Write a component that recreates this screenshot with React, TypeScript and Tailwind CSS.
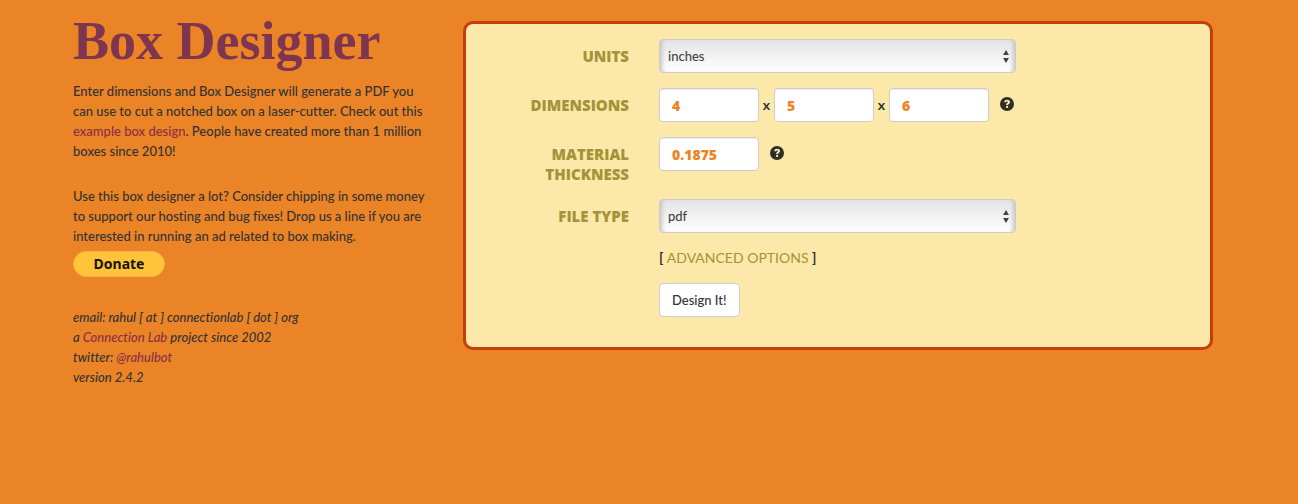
import type { ReactNode } from 'react';

function HelpIcon({ label }: { label: string }) {
  return (
    <button type="button" aria-label={label} className="mb-0.5 ml-[11px] shrink-0">
      <svg width="14" height="14" viewBox="0 0 14 14" aria-hidden="true">
        <circle cx="7" cy="7" r="7" fill="#2f2e26" />
        <path
          d="M4.2 5.2C4.3 3.5 5.4 2.7 7.1 2.7c1.7 0 2.9.9 2.9 2.3 0 1-.5 1.6-1.3 2.1-.5.3-.6.5-.6.9H6.1c0-1.1.3-1.6 1.1-2.1.5-.3.7-.5.7-.9 0-.4-.3-.6-.8-.6s-.8.3-.9.8z"
          fill="#fce9a9"
        />
        <rect x="6.1" y="8.9" width="2" height="2" fill="#fce9a9" />
      </svg>
    </button>
  );
}

function Row({ label, htmlFor, children }: { label?: string; htmlFor?: string; children: ReactNode }) {
  return (
    <div className="mb-[15px] grid grid-cols-[163px_minmax(0,1fr)] gap-x-[30px]">
      {label ? (
        <label
          htmlFor={htmlFor}
          className="pl-[15px] pt-[7px] text-right font-['Open_Sans',sans-serif] text-[15px] font-extrabold uppercase leading-5 text-[#a39439]"
        >
          {label}
        </label>
      ) : (
        <span />
      )}
      <div>{children}</div>
    </div>
  );
}

function Select({ id, options }: { id: string; options: string[] }) {
  return (
    <div className="relative max-w-[357px]">
      <select
        id={id}
        className="block h-[34px] w-full appearance-none rounded border border-[#ccc] bg-linear-to-b from-[#e4e4e4] to-white px-2 text-[13px] text-[#444] shadow-[inset_5px_0_4px_-3px_#c4c4c4,inset_-5px_0_4px_-3px_#c4c4c4]"
      >
        {options.map((option) => (
          <option key={option}>{option}</option>
        ))}
      </select>
      <svg
        className="pointer-events-none absolute right-[7px] top-[11px]"
        width="6"
        height="13"
        viewBox="0 0 6 13"
        fill="#444"
        aria-hidden="true"
      >
        <path d="M3 0 6 5H0zM0 8h6l-3 5z" />
      </svg>
    </div>
  );
}

function NumberBox({ id, value, label }: { id: string; value: string; label?: string }) {
  return (
    <input
      id={id}
      type="text"
      aria-label={label}
      defaultValue={value}
      className="h-[34px] w-[100px] min-w-0 rounded border border-[#ccc] bg-white px-3 font-['Open_Sans',sans-serif] text-sm font-extrabold text-[#eb8427] shadow-[inset_0_1px_1px_rgba(0,0,0,0.075)]"
    />
  );
}

const linkClass = 'text-[#8a2f45]';

export default function App() {
  return (
    <div className="min-h-screen bg-[#eb8427] pr-3 font-['Lato',sans-serif] text-[13px] font-medium leading-5 text-[#333] [font-variant-ligatures:none]">
      <div className="mx-auto grid max-w-[1170px] grid-cols-1 md:grid-cols-[1fr_2fr]">
        <aside className="px-[15px]">
          <h1 className="mb-2.5 mt-3 font-['Liberation_Serif',serif] text-[54px] font-bold leading-[59px] text-[#7f3550]">
            Box Designer
          </h1>
          <p className="mb-[25px]">
            Enter dimensions and Box Designer will generate a PDF you{' '}
            <br className="hidden lg:inline" />
            can use to cut a notched box on a laser-cutter. Check out this{' '}
            <br className="hidden lg:inline" />
            <a href="#example" className={linkClass}>
              example box design
            </a>
            . People have created more than 1 million{' '}
            <br className="hidden lg:inline" />
            boxes since 2010!
          </p>
          <p>
            Use this box designer a lot? Consider chipping in some money{' '}
            <br className="hidden lg:inline" />
            to support our hosting and bug fixes! Drop us a line if you are{' '}
            <br className="hidden lg:inline" />
            interested in running an ad related to box making.
          </p>
          <button
            type="button"
            className="mt-[5px] block h-[26px] w-[92px] rounded-full border border-[#fbb040] bg-[#ffc439] font-['Noto_Sans',sans-serif] text-sm font-bold leading-6 text-[#1a1208]"
          >
            Donate
          </button>
          <address className="mt-[30px] italic">
            email: rahul [ at ] connectionlab [ dot ] org
            <br />a{' '}
            <a href="#lab" className={linkClass}>
              Connection Lab
            </a>{' '}
            project since 2002
            <br />
            twitter:{' '}
            <a href="#twitter" className={linkClass}>
              @rahulbot
            </a>
            <br />
            version 2.4.2
          </address>
        </aside>
        <main className="px-[15px] pt-[21px]">
          <form
            className="rounded-[10px] border-3 border-[#c63d0f] bg-[#fce9a9] py-[15px]"
            onSubmit={(event) => event.preventDefault()}
          >
            <Row label="Units" htmlFor="units">
              <Select id="units" options={['inches', 'cm', 'mm']} />
            </Row>
            <Row label="Dimensions" htmlFor="width">
              <div className="flex items-center">
                <NumberBox id="width" value="4" />
                <span className="w-[15px] text-center text-sm font-bold">x</span>
                <NumberBox id="height" value="5" label="Height" />
                <span className="w-[15px] text-center text-sm font-bold">x</span>
                <NumberBox id="depth" value="6" label="Depth" />
                <HelpIcon label="Help with dimensions" />
              </div>
            </Row>
            <Row label="Material Thickness" htmlFor="thickness">
              <div className="flex items-center">
                <NumberBox id="thickness" value="0.1875" />
                <HelpIcon label="Help with material thickness" />
              </div>
            </Row>
            <Row label="File type" htmlFor="filetype">
              <Select id="filetype" options={['pdf', 'svg']} />
            </Row>
            <Row>
              <div className="text-sm font-bold leading-5">
                [{' '}
                <a href="#advanced" className="font-normal uppercase text-[#a39439]">
                  Advanced options
                </a>{' '}
                ]
              </div>
            </Row>
            <Row>
              <button
                type="submit"
                className="block h-[34px] rounded border border-[#ccc] bg-white px-3 text-[13px] font-medium text-[#333]"
              >
                Design It!
              </button>
            </Row>
          </form>
        </main>
      </div>
    </div>
  );
}
